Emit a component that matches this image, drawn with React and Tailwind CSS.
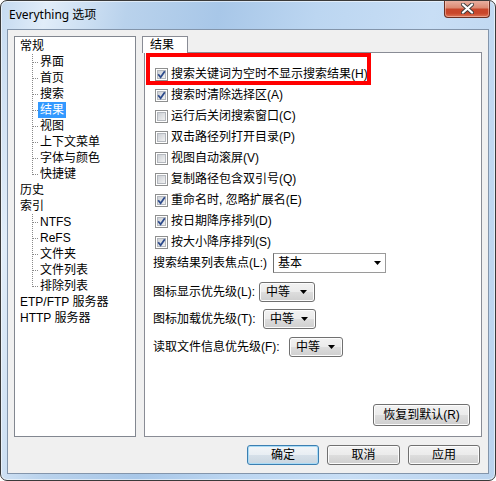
import React from "react";

function Check({ checked }) {
  return (
    <svg width="13" height="13" viewBox="0 0 13 13" className="shrink-0">
      <defs>
        <linearGradient id="cbg" x1="0" y1="0" x2="1" y2="1">
          <stop offset="0" stopColor="#c9cdd3" />
          <stop offset="1" stopColor="#f4f4f4" />
        </linearGradient>
      </defs>
      <rect x="0.5" y="0.5" width="12" height="12" fill="#ffffff" stroke="#8e8f8f" />
      <rect x="2.5" y="2.5" width="8" height="8" fill="url(#cbg)" stroke="#b4b8be" />
      {checked && (
        <path d="M3.2 6.3 L5.6 9.2 L9.8 3.2" fill="none" stroke="#2e4b8c" strokeWidth="1.8" />
      )}
    </svg>
  );
}

function Conn({ last }) {
  return (
    <svg width="9" height="16" className="shrink-0" shapeRendering="crispEdges">
      <line x1="3.5" y1="0" x2="3.5" y2={last ? 9 : 16} stroke="#8a8a8a" strokeDasharray="1 1" />
      <line x1="4" y1="8.5" x2="9" y2="8.5" stroke="#8a8a8a" strokeDasharray="1 1" />
    </svg>
  );
}

function Child({ label, last, selected }) {
  return (
    <div className="h-[16px] flex items-center pl-[14px]">
      <Conn last={last} />
      <span
        className={
          selected
            ? "px-[2px] h-[16px] leading-[16px] bg-[#3399ff] text-white"
            : "px-[2px] h-[16px] leading-[16px]"
        }
      >
        {label}
      </span>
    </div>
  );
}

function Parent({ label }) {
  return <div className="h-[16px] leading-[16px] pl-[5px] whitespace-nowrap">{label}</div>;
}

function Row({ checked, label }) {
  return (
    <div className="h-[13px] flex items-center ml-[2px] whitespace-nowrap">
      <Check checked={checked} />
      <span className="ml-[3px] leading-[13px]">{label}</span>
    </div>
  );
}

function Arrow() {
  return (
    <svg width="7" height="4" viewBox="0 0 7 4" className="shrink-0">
      <path d="M0 0 H7 L3.5 4 Z" fill="#000" />
    </svg>
  );
}

export default function App() {
  const btn =
    "h-[20px] rounded-[3px] border border-[#707070] bg-[linear-gradient(180deg,#f2f2f2_0%,#ebebeb_50%,#dddddd_51%,#cfcfcf_100%)] shadow-[inset_0_0_0_1px_#fcfcfc] flex items-center justify-center text-[12px]";
  const combo =
    "h-[20px] rounded-[3px] border border-[#707070] bg-[linear-gradient(180deg,#f2f2f2_0%,#ebebeb_50%,#dddddd_51%,#cfcfcf_100%)] shadow-[inset_0_0_0_1px_#fcfcfc] flex items-center justify-between pl-[6px] pr-[7px]";
  return (
    <div className="w-[496px] h-[481px] bg-white font-['Liberation_Sans','Noto_Sans_CJK_SC',sans-serif] text-[12px] text-black">
      <div className="w-[496px] h-[481px] rounded-[7px] border border-[#3a3a3a] bg-[linear-gradient(100deg,#c5daf0_0%,#e1edf9_8%,#b9d2ec_22%,#a8c7e8_38%,#bcd6f1_55%,#c8def5_75%,#bad3ee_100%)] shadow-[inset_0_0_0_1px_rgba(255,255,255,0.55)] flex flex-col overflow-hidden">
        {/* title bar */}
        <div className="h-[28px] shrink-0 flex items-start justify-between">
          <div className="h-[28px] flex items-center pl-[8px] font-['Noto_Sans','Noto_Sans_CJK_SC',sans-serif] text-[12px]">
            Everything 选项
          </div>
          <div className="mr-[5px] -mt-[1px] w-[46px] h-[18px] rounded-b-[4px] border border-t-0 border-[#6b2f22] bg-[linear-gradient(180deg,#eab4a6_0%,#dc8b74_45%,#c8462b_55%,#c9472b_78%,#de7656_100%)] shadow-[inset_0_0_0_1px_rgba(255,220,210,0.45)] flex items-center justify-center">
            <svg width="13" height="11" viewBox="0 0 13 11">
              <path d="M2 1.5 L11 9.5 M11 1.5 L2 9.5" stroke="#3b3b3b" strokeWidth="4" strokeLinecap="round" />
              <path d="M2 1.5 L11 9.5 M11 1.5 L2 9.5" stroke="#ffffff" strokeWidth="2.3" strokeLinecap="round" />
            </svg>
          </div>
        </div>

        {/* client area */}
        <div className="mx-[6px] mb-[6px] flex-1 border border-[#8395ab] bg-[#f0f0f0] flex flex-col pt-[6px] px-[6px] pb-[8px]">
          <div className="flex h-[401px] gap-[6px]">
            {/* tree */}
            <div className="w-[122px] h-[401px] border border-[#828790] bg-white pt-[1px] overflow-hidden">
              <Parent label="常规" />
              <Child label="界面" />
              <Child label="首页" />
              <Child label="搜索" />
              <Child label="结果" selected />
              <Child label="视图" />
              <Child label="上下文菜单" />
              <Child label="字体与颜色" />
              <Child label="快捷键" last />
              <Parent label="历史" />
              <Parent label="索引" />
              <Child label="NTFS" />
              <Child label="ReFS" />
              <Child label="文件夹" />
              <Child label="文件列表" />
              <Child label="排除列表" last />
              <Parent label="ETP/FTP 服务器" />
              <Parent label="HTTP 服务器" />
            </div>

            {/* tab area */}
            <div className="w-[340px] flex flex-col">
              <div className="h-[17px] w-[46px] -mb-[1px] relative z-10 border border-b-0 border-[#898c95] bg-white pl-[7px] leading-[16px]">
                结果
              </div>
              <div className="ml-[2px] flex-1 border border-[#898c95] bg-white relative flex flex-col pt-[15px] pl-[8px]">
                <div className="absolute left-[1px] top-0 w-[225px] h-[32px] border-4 border-[#ff0000]" />
                <div className="flex flex-col gap-[8px]">
                  <Row checked label="搜索关键词为空时不显示搜索结果(H)" />
                  <Row checked label="搜索时清除选择区(A)" />
                  <Row label="运行后关闭搜索窗口(C)" />
                  <Row label="双击路径列打开目录(P)" />
                  <Row label="视图自动滚屏(V)" />
                  <Row label="复制路径包含双引号(Q)" />
                  <Row checked label="重命名时, 忽略扩展名(E)" />
                  <Row checked label="按日期降序排列(D)" />
                  <Row checked label="按大小降序排列(S)" />
                </div>

                <div className="mt-[4px] h-[20px] flex items-center whitespace-nowrap">
                  <span className="w-[120px] shrink-0">搜索结果列表焦点(L:)</span>
                  <div className="w-[113px] h-[20px] border border-[#9a9a9a] border-l-[#6f6f6f] bg-white flex items-center justify-between pl-[4px] pr-[4px]">
                    <span>基本</span>
                    <Arrow />
                  </div>
                </div>
                <div className="mt-[9px] h-[20px] flex items-center whitespace-nowrap">
                  <span className="w-[106px] shrink-0">图标显示优先级(L):</span>
                  <div className={combo + " w-[56px]"}>
                    <span>中等</span>
                    <Arrow />
                  </div>
                </div>
                <div className="mt-[7px] h-[20px] flex items-center whitespace-nowrap">
                  <span className="w-[110px] shrink-0">图标加载优先级(T):</span>
                  <div className={combo + " w-[53px]"}>
                    <span>中等</span>
                    <Arrow />
                  </div>
                </div>
                <div className="mt-[8px] h-[20px] flex items-center whitespace-nowrap">
                  <span className="w-[136px] shrink-0">读取文件信息优先级(F):</span>
                  <div className={combo + " w-[54px]"}>
                    <span>中等</span>
                    <Arrow />
                  </div>
                </div>

                <div className={btn + " mt-auto self-end mr-[11px] mb-[10px] w-[97px] h-[22px]"}>
                  恢复到默认(R)
                </div>
              </div>
            </div>
          </div>

          {/* bottom buttons */}
          <div className="flex justify-end gap-[8px] mt-[8px] mr-[2px]">
            <div className="w-[72px] h-[20px] rounded-[3px] border border-[#3c7fb1] bg-[linear-gradient(180deg,#f2f5f8_0%,#e8eef3_50%,#d6e0e9_51%,#cad6e0_100%)] shadow-[inset_0_0_0_1px_#a9dbf6] flex items-center justify-center">
              确定
            </div>
            <div className={btn + " w-[73px]"}>取消</div>
            <div className={btn + " w-[72px]"}>应用</div>
          </div>
        </div>
      </div>
    </div>
  );
}
